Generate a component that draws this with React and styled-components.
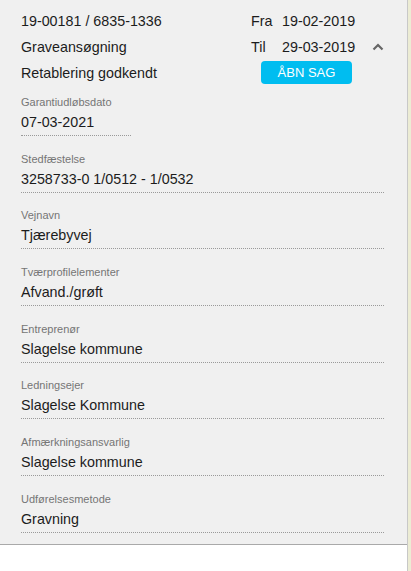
import styled, { createGlobalStyle } from "styled-components";

const GlobalStyle = createGlobalStyle`
  html, body {
    margin: 0;
    padding: 0;
    background: #ffffff;
    font-family: "Liberation Sans", Arial, sans-serif;
  }
`;

const fields = [
  { label: "Garantiudløbsdato", value: "07-03-2021", short: true },
  { label: "Stedfæstelse", value: "3258733-0 1/0512 - 1/0532" },
  { label: "Vejnavn", value: "Tjærebyvej" },
  { label: "Tværprofilelementer", value: "Afvand./grøft" },
  { label: "Entreprenør", value: "Slagelse kommune" },
  { label: "Ledningsejer", value: "Slagelse Kommune" },
  { label: "Afmærkningsansvarlig", value: "Slagelse kommune" },
  { label: "Udførelsesmetode", value: "Gravning" },
];

const App = () => {
  return (
    <>
      <GlobalStyle />
      <Page>
        <Main>
          <Panel>
            <Header>
              <Info>
                <Line>19-00181 / 6835-1336</Line>
                <Line>Graveansøgning</Line>
                <Line>Retablering godkendt</Line>
              </Info>
              <Dates>
                <DateRow>
                  <DateLabel>Fra</DateLabel>
                  <span>19-02-2019</span>
                </DateRow>
                <DateRow>
                  <DateLabel>Til</DateLabel>
                  <span>29-03-2019</span>
                </DateRow>
                <OpenButton>ÅBN SAG</OpenButton>
              </Dates>
              <Toggle aria-label="Luk">
                <svg width="12" height="8" viewBox="0 0 12 8">
                  <polyline
                    points="1.5,6.5 6,2 10.5,6.5"
                    fill="none"
                    stroke="#666"
                    strokeWidth="2.2"
                  />
                </svg>
              </Toggle>
            </Header>
            {fields.map((f) => (
              <Field key={f.label} short={f.short}>
                <Label>{f.label}</Label>
                <Value>{f.value}</Value>
              </Field>
            ))}
          </Panel>
        </Main>
        <SideStrip />
      </Page>
    </>
  );
};
export default App;

const Page = styled.div`
  display: flex;
  flex-direction: row;
  height: 571px;
`;

const Main = styled.div`
  flex: 1;
  background: #ffffff;
`;

const Panel = styled.div`
  background: #f0f0f0;
  border-bottom: 1px solid #a9a9a9;
  padding: 8px 23px 11px 21px;
`;

const Header = styled.div`
  display: flex;
  flex-direction: row;
  margin-bottom: 9px;
  color: #1c1c1c;
  font-size: 14.3px;
`;

const Info = styled.div`
  flex: 1;
  display: flex;
  flex-direction: column;
`;

const Line = styled.div`
  line-height: 26px;
`;

const Dates = styled.div`
  display: flex;
  flex-direction: column;
  width: 114px;
`;

const DateRow = styled.div`
  display: flex;
  flex-direction: row;
  line-height: 26px;
`;

const DateLabel = styled.span`
  width: 31px;
`;

const OpenButton = styled.button`
  margin: 1px 0 0 10px;
  width: 91px;
  height: 23px;
  border: none;
  border-radius: 4px;
  background: #00bdf0;
  color: #ffffff;
  font-family: "Liberation Sans", Arial, sans-serif;
  font-size: 13px;
  padding: 0;
  cursor: pointer;
`;

const Toggle = styled.div`
  width: 19px;
  display: flex;
  justify-content: flex-end;
  padding-top: 35px;
  align-items: flex-start;
`;

const Field = styled.div`
  width: ${(props) => (props.short ? "110px" : "auto")};
  padding-bottom: 3px;
  border-bottom: 1px dotted #9a9a9a;
  margin-bottom: 15.7px;
  &:last-child {
    margin-bottom: 0;
  }
`;

const Label = styled.div`
  font-size: 11px;
  line-height: 14px;
  color: #757575;
  margin-bottom: 3px;
`;

const Value = styled.div`
  font-size: 14.3px;
  line-height: 20px;
  color: #1c1c1c;
`;

const SideStrip = styled.div`
  width: 3px;
  background: #ececd4;
  border-left: 1px solid #c8c8c8;
`;
